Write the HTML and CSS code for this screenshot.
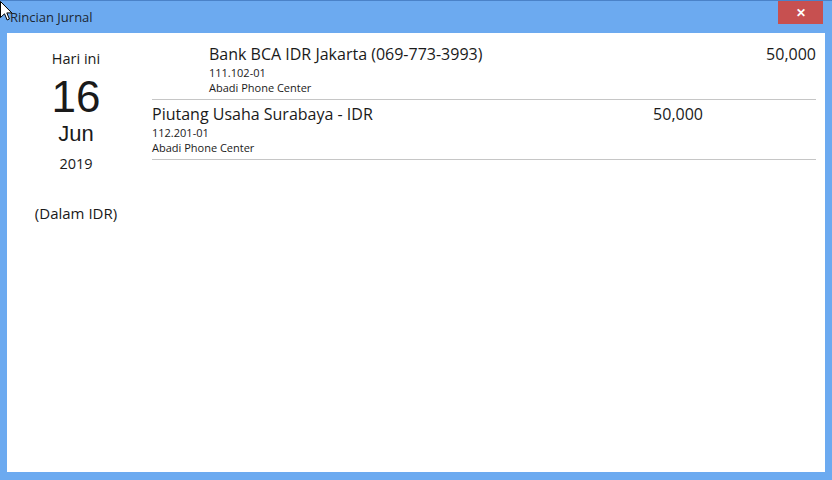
FILE: index.html
```html
<!DOCTYPE html>
<html>
<head>
<meta charset="utf-8">
<title>Rincian Jurnal</title>
<link rel="stylesheet" href="styles.css">
</head>
<body>
<div class="window">
  <div class="titlebar">
    <span class="title">Rincian Jurnal</span>
    <div class="close">&#x2715;</div>
  </div>
  <div class="content">
    <div class="datecol">
      <div class="today">Hari ini</div>
      <div class="day">16</div>
      <div class="month">Jun</div>
      <div class="year">2019</div>
      <div class="currency">(Dalam IDR)</div>
    </div>
    <div class="entries">
      <div class="entry">
        <div class="info indent">
          <div class="acct">Bank BCA IDR Jakarta (069-773-3993)</div>
          <div class="code">111.102-01</div>
          <div class="company">Abadi Phone Center</div>
        </div>
        <div class="amt"></div>
        <div class="amt">50,000</div>
      </div>
      <div class="entry">
        <div class="info">
          <div class="acct">Piutang Usaha Surabaya - IDR</div>
          <div class="code">112.201-01</div>
          <div class="company">Abadi Phone Center</div>
        </div>
        <div class="amt">50,000</div>
        <div class="amt"></div>
      </div>
    </div>
  </div>
  <svg class="cursor" width="13" height="21" viewBox="0 0 13 21">
    <path d="M0.5 0.5 L0.5 16.5 L4.5 12.8 L7.2 19 L9.4 18 L6.8 11.9 L11.8 11.9 Z" fill="#fff" stroke="#000" stroke-width="1"/>
  </svg>
</div>
</body>
</html>
```
FILE: styles.css
```css
html, body {
  margin: 0;
  padding: 0;
}
body {
  font-family: "Open Sans", "Noto Sans", sans-serif;
  color: #1a1a1a;
}
.window {
  position: relative;
  width: 832px;
  height: 480px;
  box-sizing: border-box;
  background: #6caaf0;
  border-top: 1px solid #4a82c8;
  display: flex;
  flex-direction: column;
  overflow: hidden;
}
.titlebar {
  height: 32px;
  display: flex;
  justify-content: space-between;
  align-items: flex-start;
}
.title {
  margin-left: 10px;
  margin-top: 7px;
  font-size: 13px;
  color: #1c2733;
}
.close {
  width: 45px;
  height: 23px;
  margin-right: 9px;
  background: #c75050;
  color: #fff;
  font-size: 12px;
  font-weight: bold;
  display: flex;
  align-items: center;
  justify-content: center;
}
.content {
  flex: 1;
  margin: 0 7px 8px 7px;
  background: #fff;
  display: flex;
}
.datecol {
  width: 138px;
  text-align: center;
  padding-top: 17px;
  display: flex;
  flex-direction: column;
}
.today {
  font-size: 14.5px;
  line-height: 18px;
}
.day {
  font-family: "Liberation Sans", "Open Sans", sans-serif;
  font-size: 44px;
  line-height: 42px;
  margin-top: 8px;
}
.month {
  font-family: "Liberation Sans", "Open Sans", sans-serif;
  font-size: 22px;
  line-height: 28px;
  margin-top: 2px;
}
.year {
  font-size: 14.5px;
  line-height: 18px;
  margin-top: 7px;
}
.currency {
  font-size: 15px;
  line-height: 20px;
  margin-top: 30px;
}
.entries {
  flex: 1;
  margin-left: 7px;
  margin-right: 9px;
  padding-top: 11px;
}
.entry {
  display: grid;
  grid-template-columns: 1fr 120px 113px;
  padding: 0 0 4px 0;
  border-bottom: 1px solid #c6c6c6;
}
.entry + .entry {
  padding-top: 4px;
}
.info.indent {
  padding-left: 57px;
}
.acct {
  font-size: 16px;
  line-height: 21px;
}
.code, .company {
  font-size: 11px;
  line-height: 15px;
}
.amt {
  font-size: 16px;
  line-height: 21px;
  text-align: right;
}
.cursor {
  position: absolute;
  left: 0;
  top: 0;
}
```
